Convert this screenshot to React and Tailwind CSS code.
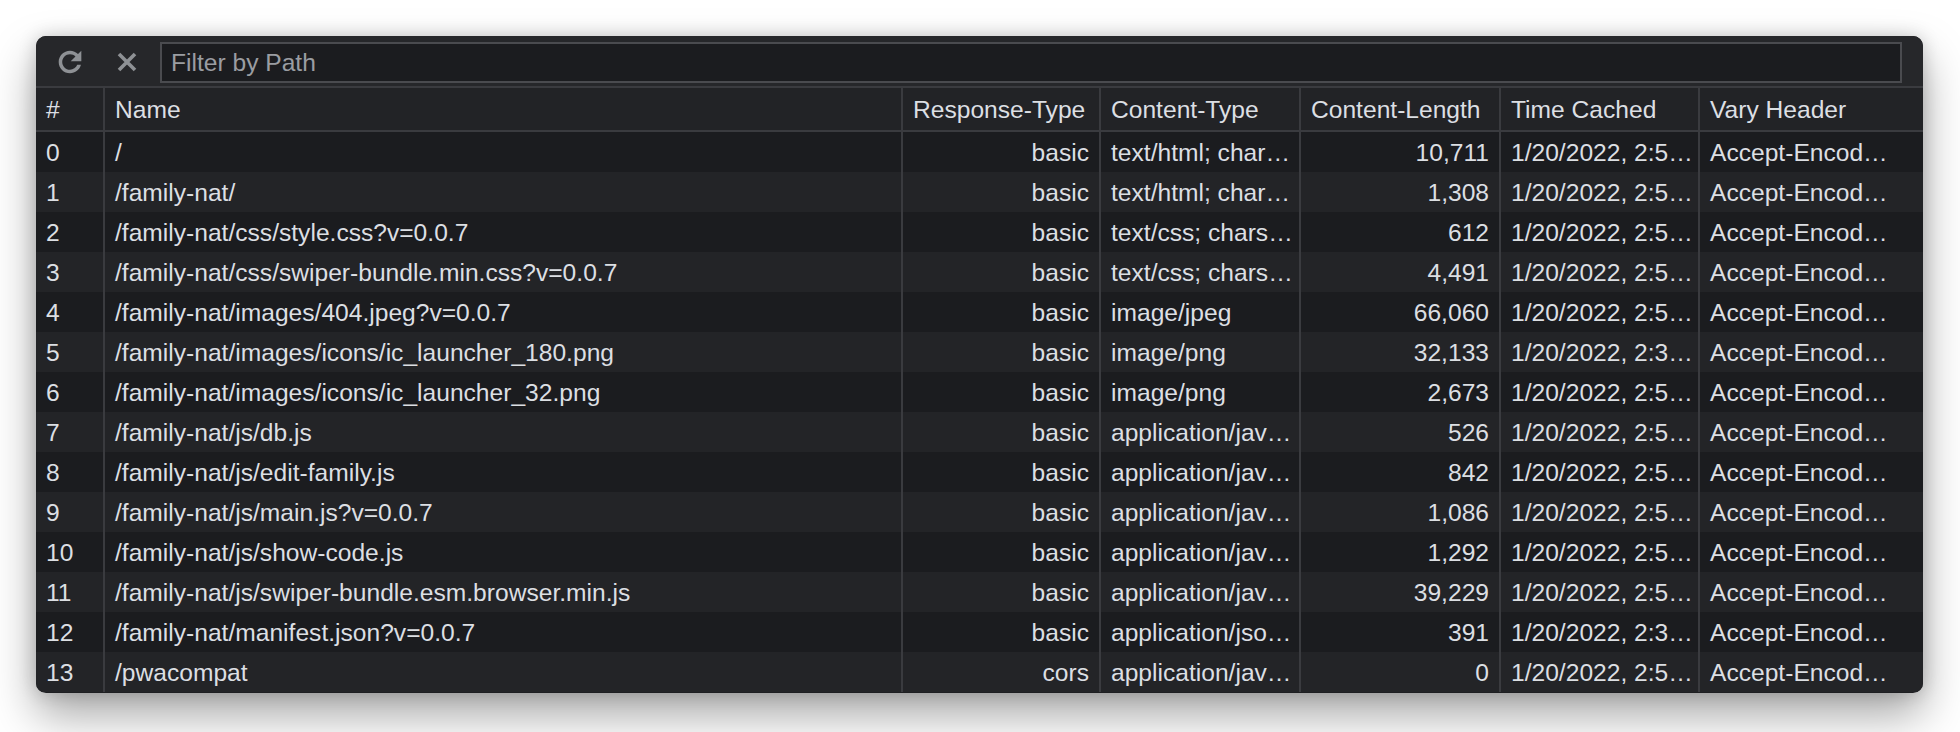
const rows = [
  ['0', '/', 'basic', 'text/html; char…', '10,711', '1/20/2022, 2:5…', 'Accept-Encod…'],
  ['1', '/family-nat/', 'basic', 'text/html; char…', '1,308', '1/20/2022, 2:5…', 'Accept-Encod…'],
  ['2', '/family-nat/css/style.css?v=0.0.7', 'basic', 'text/css; chars…', '612', '1/20/2022, 2:5…', 'Accept-Encod…'],
  ['3', '/family-nat/css/swiper-bundle.min.css?v=0.0.7', 'basic', 'text/css; chars…', '4,491', '1/20/2022, 2:5…', 'Accept-Encod…'],
  ['4', '/family-nat/images/404.jpeg?v=0.0.7', 'basic', 'image/jpeg', '66,060', '1/20/2022, 2:5…', 'Accept-Encod…'],
  ['5', '/family-nat/images/icons/ic_launcher_180.png', 'basic', 'image/png', '32,133', '1/20/2022, 2:3…', 'Accept-Encod…'],
  ['6', '/family-nat/images/icons/ic_launcher_32.png', 'basic', 'image/png', '2,673', '1/20/2022, 2:5…', 'Accept-Encod…'],
  ['7', '/family-nat/js/db.js', 'basic', 'application/jav…', '526', '1/20/2022, 2:5…', 'Accept-Encod…'],
  ['8', '/family-nat/js/edit-family.js', 'basic', 'application/jav…', '842', '1/20/2022, 2:5…', 'Accept-Encod…'],
  ['9', '/family-nat/js/main.js?v=0.0.7', 'basic', 'application/jav…', '1,086', '1/20/2022, 2:5…', 'Accept-Encod…'],
  ['10', '/family-nat/js/show-code.js', 'basic', 'application/jav…', '1,292', '1/20/2022, 2:5…', 'Accept-Encod…'],
  ['11', '/family-nat/js/swiper-bundle.esm.browser.min.js', 'basic', 'application/jav…', '39,229', '1/20/2022, 2:5…', 'Accept-Encod…'],
  ['12', '/family-nat/manifest.json?v=0.0.7', 'basic', 'application/jso…', '391', '1/20/2022, 2:3…', 'Accept-Encod…'],
  ['13', '/pwacompat', 'cors', 'application/jav…', '0', '1/20/2022, 2:5…', 'Accept-Encod…'],
];

const headers = ['#', 'Name', 'Response-Type', 'Content-Type', 'Content-Length', 'Time Cached', 'Vary Header'];

// widths of the columns, the last one takes the rest
const widths = ['w-[69px]', 'w-[798px]', 'w-[198px]', 'w-[200px]', 'w-[200px]', 'w-[199px]', 'flex-1'];
const rightAligned = [false, false, true, false, true, false, false];

const Cell = ({ i, children, header }) => (
  <div
    className={`${widths[i]} shrink-0 h-full flex items-center pt-[3px] px-[10px] overflow-hidden whitespace-nowrap ${
      i < 6 ? 'border-r-2 border-[#3a3b3f]' : ''
    } ${!header && rightAligned[i] ? 'justify-end' : ''}`}
  >
    {children}
  </div>
);

const RefreshIcon = () => (
  <svg width="34" height="34" viewBox="0 0 24 24" fill="#8e9195">
    <path d="M17.65 6.35C16.2 4.9 14.21 4 12 4c-4.42 0-7.990 3.58-7.99 8s3.57 8 7.99 8c3.73 0 6.84-2.55 7.73-6h-2.6c-.82 2.1-2.9 3.5-5.130 3.5-3.04 0-5.5-2.46-5.5-5.5s2.46-5.5 5.5-5.5c1.52 0 2.88.62 3.87 1.63L12.5 11.5h7.5V4l-2.35 2.35z" />
  </svg>
);

const CloseIcon = () => (
  <svg width="20" height="20" viewBox="0 0 20 20" stroke="#8e9195" strokeWidth="3.6" strokeLinecap="butt">
    <path d="M2 2L18 18M18 2L2 18" />
  </svg>
);

export default function App() {
  return (
    <div className="w-[1960px] h-[732px] bg-white pt-[36px] pl-[36px] pr-[37px] overflow-hidden">
      <div
        className="h-[657px] rounded-[10px] overflow-hidden bg-[#1e1f22] text-[24.6px] text-[#dcdfe3] shadow-[0_22px_45px_rgba(0,0,0,0.35),0_0_18px_rgba(0,0,0,0.18)]"
        style={{ fontFamily: '"Liberation Sans", Arial, sans-serif' }}
      >
        <div className="h-[52px] flex items-center pl-[17px] pr-[21px] pt-[2px] bg-[#26272a] border-b-2 border-[#3a3b3f]">
          <RefreshIcon />
          <div className="ml-[30px] flex">
            <CloseIcon />
          </div>
          <input
            className="ml-[23px] flex-1 h-[41px] bg-[#1b1c1f] border-2 border-[#4a4b4f] pl-[9px] pt-[2px] text-[24.6px] text-[#dcdfe3] placeholder:text-[#9a9da2] outline-none"
            placeholder="Filter by Path"
            style={{ fontFamily: '"Liberation Sans", Arial, sans-serif' }}
          />
        </div>

        <div className="h-[44px] flex bg-[#222326] border-b-2 border-[#3a3b3f]">
          {headers.map((h, i) => (
            <Cell key={h} i={i} header>
              {h}
            </Cell>
          ))}
        </div>

        {rows.map((r, idx) => (
          <div key={r[0]} className={`h-[40px] flex ${idx % 2 === 0 ? 'bg-[#1b1c1f]' : 'bg-[#232427]'}`}>
            {r.map((v, i) => (
              <Cell key={i} i={i}>
                {v}
              </Cell>
            ))}
          </div>
        ))}
      </div>
    </div>
  );
}
